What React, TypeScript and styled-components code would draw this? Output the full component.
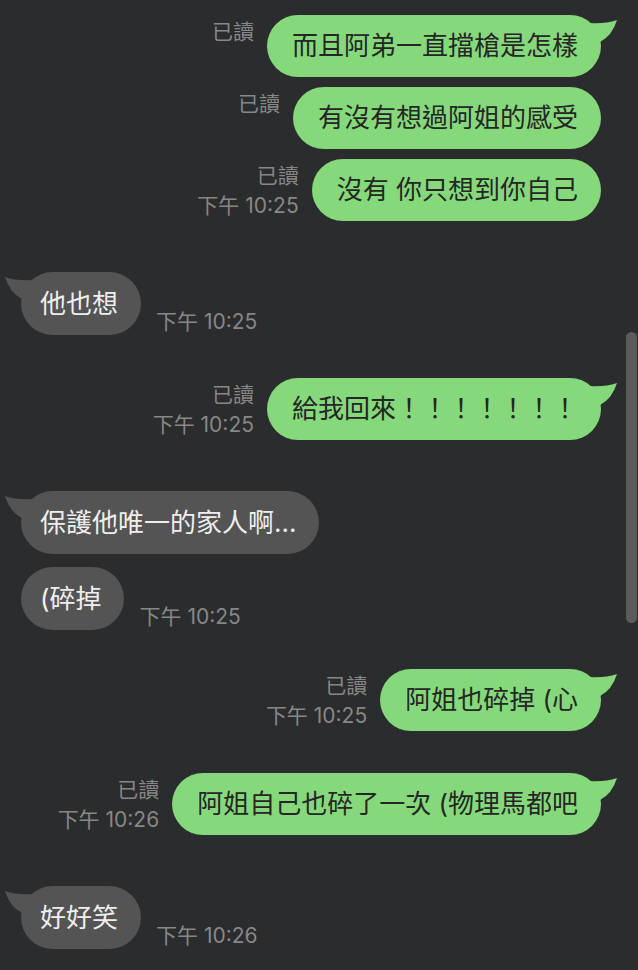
import styled, { createGlobalStyle } from "styled-components";

const GlobalStyle = createGlobalStyle`
    html, body {
        margin: 0;
        padding: 0;
        background-color: #2b2c2e;
    }
    body {
        font-family: "Inter", "Noto Sans CJK TC", "Noto Sans", sans-serif;
    }
`;

const PageWrapper = styled.div`
    position: relative;
    height: 970px;
    overflow: hidden;
    box-sizing: border-box;
    padding: 15px 37px 0 21px;
    display: flex;
    flex-direction: column;
`;

const Row = styled.div<{ $mine: boolean; $top: number }>`
    display: flex;
    justify-content: ${(p) => (p.$mine ? "flex-end" : "flex-start")};
    align-items: ${(p) => (p.$mine ? "flex-start" : "flex-end")};
    gap: ${(p) => (p.$mine ? "13px" : "15px")};
    margin-top: ${(p) => p.$top}px;
`;

const Meta = styled.div<{ $mine: boolean }>`
    display: flex;
    flex-direction: column;
    align-items: ${(p) => (p.$mine ? "flex-end" : "flex-start")};
    font-size: 21px;
    line-height: 30px;
    color: #878787;
    white-space: nowrap;
    margin-top: ${(p) => (p.$mine ? "2px" : "0")};
    margin-bottom: ${(p) => (p.$mine ? "0" : "-2px")};
`;

const Bubble = styled.div<{ $mine: boolean }>`
    position: relative;
    box-sizing: border-box;
    height: ${(p) => (p.$mine ? "62px" : "63px")};
    border-radius: 32px;
    padding: ${(p) => (p.$mine ? "14px 23px 0 25px" : "15px 23px 0 19px")};
    font-size: 26px;
    line-height: 34px;
    white-space: nowrap;
    background-color: ${(p) => (p.$mine ? "#85d97b" : "#545454")};
    color: ${(p) => (p.$mine ? "#262626" : "#efefef")};
`;

const Tail = styled.svg<{ $mine: boolean }>`
    position: absolute;
    top: 5px;
    width: 28px;
    height: 23px;
    ${(p) => (p.$mine ? "right: -17px;" : "left: -17px; transform: scaleX(-1);")}
    fill: ${(p) => (p.$mine ? "#85d97b" : "#545454")};
`;

const ScrollThumb = styled.div`
    position: absolute;
    right: 1px;
    top: 332px;
    width: 11px;
    height: 291px;
    border-radius: 6px;
    background-color: #5b5b5b;
`;

type Msg = {
    mine: boolean;
    text: string;
    top: number;
    read?: boolean;
    time?: string;
    tail?: boolean;
};

const messages: Msg[] = [
    { mine: true, text: "而且阿弟一直擋槍是怎樣", top: 0, read: true, tail: true },
    { mine: true, text: "有沒有想過阿姐的感受", top: 10, read: true },
    { mine: true, text: "沒有 你只想到你自己", top: 10, read: true, time: "下午 10:25" },
    { mine: false, text: "他也想", top: 51, time: "下午 10:25", tail: true },
    { mine: true, text: "給我回來！！！！！！！", top: 43, read: true, time: "下午 10:25", tail: true },
    { mine: false, text: "保護他唯一的家人啊...", top: 51, tail: true },
    { mine: false, text: "(碎掉", top: 13, time: "下午 10:25" },
    { mine: true, text: "阿姐也碎掉 (心", top: 39, read: true, time: "下午 10:25", tail: true },
    { mine: true, text: "阿姐自己也碎了一次 (物理馬都吧", top: 42, read: true, time: "下午 10:26", tail: true },
    { mine: false, text: "好好笑", top: 51, time: "下午 10:26", tail: true },
];

function BubbleTail({ mine }: { mine: boolean }) {
    return (
        <Tail $mine={mine} viewBox="0 0 28 23">
            <path d="M0 3 Q15 4 27 0 Q22 16 10 22 L0 22 Z" />
        </Tail>
    );
}

export default function App() {
    return (
        <PageWrapper>
            <GlobalStyle />
            {messages.map((m, i) => {
                const meta = (m.read || m.time) && (
                    <Meta $mine={m.mine}>
                        {m.read && <span>已讀</span>}
                        {m.time && <span>{m.time}</span>}
                    </Meta>
                );
                return (
                    <Row key={i} $mine={m.mine} $top={m.top}>
                        {m.mine && meta}
                        <Bubble $mine={m.mine}>
                            {m.tail && <BubbleTail mine={m.mine} />}
                            {m.text}
                        </Bubble>
                        {!m.mine && meta}
                    </Row>
                );
            })}
            <ScrollThumb />
        </PageWrapper>
    );
}
